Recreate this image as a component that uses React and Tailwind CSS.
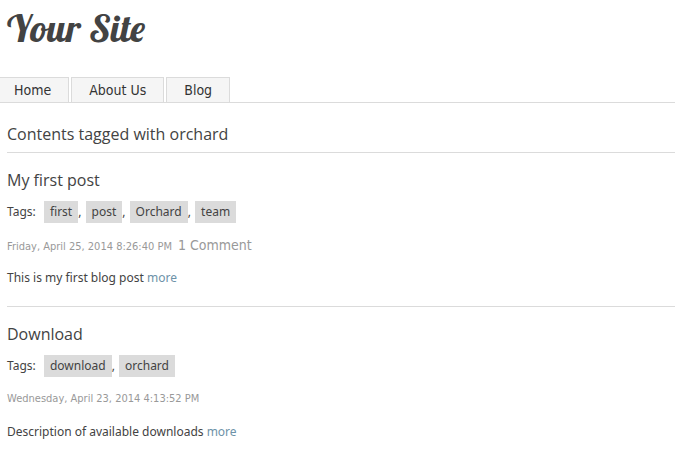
const navItems = ["Home", "About Us", "Blog"];

const posts = [
  {
    title: "My first post",
    tags: ["first", "post", "Orchard", "team"],
    date: "Friday, April 25, 2014 8:26:40 PM",
    comments: "1 Comment",
    summary: "This is my first blog post",
  },
  {
    title: "Download",
    tags: ["download", "orchard"],
    date: "Wednesday, April 23, 2014 4:13:52 PM",
    summary: "Description of available downloads",
  },
];

function Post({ post }) {
  return (
    <article className="border-t border-[#dbdbdb] pt-[15px] pb-4">
      <h2 className="font-['Open_Sans',sans-serif] text-base leading-6">
        <a href="#post">{post.title}</a>
      </h2>
      <p className="mt-2 text-xs leading-6">
        <span className="mr-1">Tags:</span>{" "}
        {post.tags.map((tag, i) => (
          <span key={tag}>
            {i > 0 && ", "}
            <a href="#tag" className="ml-px inline-block bg-[#dbdbdb] px-1.5 leading-[22px]">
              {tag}
            </a>
          </span>
        ))}
      </p>
      <div className="mt-[9px] flex h-6 items-baseline gap-1.5 font-['DejaVu_Sans_Condensed','DejaVu_Sans',sans-serif] text-[#999999]">
        <time className="text-[11px] leading-6">{post.date}</time>
        {post.comments && (
          <a href="#comments" className="text-sm leading-6">
            {post.comments}
          </a>
        )}
      </div>
      <p className="mt-[9px] text-xs leading-6">
        {post.summary}{" "}
        <a href="#more" className="text-[#6d92a8]">
          more
        </a>
      </p>
    </article>
  );
}

export default function App() {
  return (
    <div className="min-h-screen overflow-hidden bg-white font-['Noto_Sans',sans-serif] text-[#434343]">
      <header>
        <h1 className="px-[7px] pt-2 font-['Lobster','Liberation_Serif',serif] text-[38px] leading-10 font-normal">
          <a href="#home">Your Site</a>
        </h1>
        <nav className="mt-[29px] border-b border-[#dbdbdb]">
          <ul className="-ml-1 flex gap-0.5 font-['DejaVu_Sans_Condensed','DejaVu_Sans',sans-serif] text-sm leading-6 text-[#333333]">
            {navItems.map((item) => (
              <li key={item}>
                <a
                  href="#nav"
                  className="block border border-b-0 border-[#dbdbdb] bg-[#f5f5f5] px-[17px]"
                >
                  {item}
                </a>
              </li>
            ))}
          </ul>
        </nav>
      </header>
      <main className="pt-[19px] pl-[7px]">
        <h1 className="pb-[6px] font-['Open_Sans',sans-serif] text-base leading-6">
          Contents tagged with orchard
        </h1>
        {posts.map((post) => (
          <Post key={post.title} post={post} />
        ))}
      </main>
    </div>
  );
}
